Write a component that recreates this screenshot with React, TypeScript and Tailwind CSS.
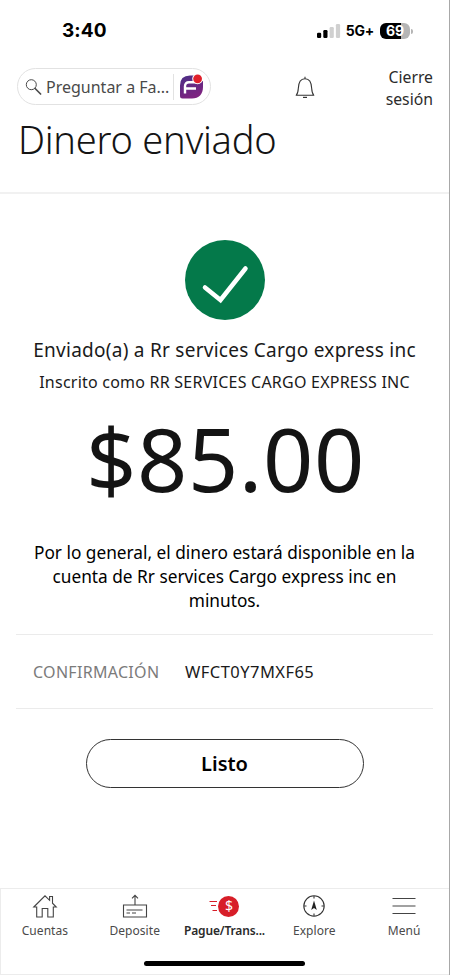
import type { ReactNode } from "react";

function StatusBar() {
  return (
    <div className="flex h-[62px] items-start justify-between pl-[62px] pr-[36px] pt-[20px] font-['Inter',sans-serif] text-black">
      <span className="text-[19px] font-bold leading-[22px] tracking-[0.1px]">3:40</span>
      <div className="flex h-[22px] items-center">
        <svg width="24" height="16" viewBox="0 0 24 16" className="mr-[5px]">
          <rect x="0" y="9.800" width="4.200" height="5.200" rx="1.200" fill="#000" />
          <rect x="6.300" y="7" width="4.200" height="8" rx="1.200" fill="#000" />
          <rect x="12.600" y="4" width="4.200" height="11" rx="1.200" fill="#d0d0d0" />
          <rect x="18.900" y="1" width="4.200" height="14" rx="1.200" fill="#d0d0d0" />
        </svg>
        <span className="mr-[6px] text-[14px] font-bold leading-[22px] tracking-[-0.200px]">5G+</span>
        <div className="flex h-[16px] w-[30px] items-center justify-center rounded-[6px] bg-linear-to-r from-black from-70% to-[#b5b5b5] to-70%">
          <span className="text-[14px] font-bold leading-[16px] text-white">69</span>
        </div>
        <span className="ml-px h-[5px] w-[2px] rounded-r-full bg-[#b5b5b5]" />
      </div>
    </div>
  );
}

function FargoLogo() {
  return (
    <svg width="26" height="26" viewBox="0 0 26 26">
      <defs>
        <linearGradient id="fargo" x1="0" y1="0" x2="0.4" y2="1">
          <stop offset="0" stopColor="#4a2f86" />
          <stop offset="1" stopColor="#7d2380" />
        </linearGradient>
      </defs>
      <path
        d="M11 1.500H16V7H24V13C24 20 20 24.500 13 24.500H3.500Q1 24.500 1 22V11.500Q1 1.500 11 1.500Z"
        fill="url(#fargo)"
      />
      <path
        d="M20 8.300H10Q6 8.300 6 12.300V19.500M6 15.500Q6 14.500 7.500 14.500H17"
        fill="none"
        stroke="#fff"
        strokeWidth="2.400"
      />
      <circle cx="18.600" cy="4.800" r="5.400" fill="#fff" />
      <circle cx="18.600" cy="4.800" r="4.400" fill="#e0202b" />
    </svg>
  );
}

function Header() {
  return (
    <header className="h-[132px] border-b-2 border-[#f1f1f1]">
      <div className="flex h-[55px] items-start pl-[17px] pr-[16px] pt-[6px]">
        <div className="flex h-[37px] w-[194px] items-center rounded-full border border-[#e2e2e2] pl-[7px]">
          <svg width="18" height="18" viewBox="0 0 18 18" fill="none" stroke="#4a4a4a">
            <circle cx="6.300" cy="6.700" r="5" strokeWidth="1" />
            <path d="M10.100 10.500L15.600 16" strokeWidth="1.700" strokeLinecap="round" />
          </svg>
          <span className="ml-[3px] w-[127px] whitespace-nowrap text-[16px] leading-[20px] text-[#4a4a4a]">
            Preguntar a Fa...
          </span>
          <span className="mr-[5px] h-[26px] w-px bg-[#e2e2e2]" />
          <FargoLogo />
        </div>
        <svg width="20" height="24" viewBox="0 0 20 24" fill="none" stroke="#333" className="ml-[84px] mt-[8px]">
          <path
            d="M1.200 19.300H18.800C17.200 17.600 16.900 16 16.700 12.500C16.500 6.500 14.800 2.700 10 2.700C5.200 2.700 3.500 6.500 3.300 12.500C3.100 16 2.800 17.600 1.200 19.300ZM10 2.700V0.800"
            strokeWidth="1.100"
            strokeLinejoin="round"
          />
          <path d="M8 21.400H12" strokeWidth="1.200" />
        </svg>
        <span className="-mt-[2px] ml-auto w-[60px] text-right text-[15.750px] leading-[22px] text-[#2b2b2b]">
          Cierre sesión
        </span>
      </div>
      <h1 className="pl-[18px] text-[38px] font-[260] leading-[44px] tracking-[-0.250px] text-[#141414]">
        Dinero enviado
      </h1>
    </header>
  );
}

function TabItem({ label, active, children }: { label: string; active?: boolean; children: ReactNode }) {
  return (
    <div className="flex w-[90px] flex-col items-center">
      <div className="flex h-[26px] items-center justify-center">{children}</div>
      <span
        className={`mt-[4px] whitespace-nowrap text-[12px] leading-[16px] ${active ? "tracking-[-0.150px] font-semibold text-[#2b2b2b]" : "tracking-[0.050px] text-[#4a4a4a]"}`}
      >
        {label}
      </span>
    </div>
  );
}

function TabBar() {
  return (
    <nav className="mt-auto h-[87px] border-b border-l border-t border-[#ececec]">
      <div className="-ml-px flex pt-[4px]">
        <TabItem label="Cuentas">
          <svg width="26" height="26" viewBox="0 0 26 26" fill="none" stroke="#444" strokeWidth="1.100">
            <path d="M1.800 14L13 2.800L17.600 7.300V3.500H20.500V10.200L24.200 14H21.300V24H15.800V15.500H10.200V24H4.700V14Z" />
          </svg>
        </TabItem>
        <TabItem label="Deposite">
          <svg width="26" height="26" viewBox="0 0 26 26" fill="none" stroke="#444" strokeWidth="1.100">
            <path d="M1.500 12H24.500V24H1.500ZM13 12V2.500M10 5.300L13 2.300L16 5.300M4.500 17H20.500M4.500 20H8M10 20H14" />
          </svg>
        </TabItem>
        <TabItem label="Pague/Trans..." active>
          <div className="flex items-center">
            <svg width="9" height="22" viewBox="0 0 9 22" stroke="#d71e28" strokeWidth="1.100">
              <path d="M0.500 6.500H8M2 10.500H7M3.500 15.500H8" />
            </svg>
            <span className="flex h-[21px] w-[21px] items-center justify-center rounded-full bg-[#d71e28] text-[14px] leading-[20px] text-white">
              $
            </span>
          </div>
        </TabItem>
        <TabItem label="Explore">
          <svg width="26" height="26" viewBox="0 0 26 26" fill="none" stroke="#333" strokeWidth="1.100">
            <circle cx="13" cy="13" r="10.200" />
            <path d="M13 3V5.500M13 20.500V23M3 13H5.500M20.500 13H23" />
            <path d="M13 7.500L15.800 17L13 15L10.200 17Z" fill="#222" stroke="none" />
          </svg>
        </TabItem>
        <TabItem label="Menú">
          <svg width="24" height="18" viewBox="0 0 24 18" stroke="#444" strokeWidth="1.200">
            <path d="M0.500 1.500H23.500M0.500 9H23.500M0.500 16.500H23.500" />
          </svg>
        </TabItem>
      </div>
      <div className="ml-[143px] mt-[22px] h-[5px] w-[161px] rounded-full bg-black" />
    </nav>
  );
}

export default function App() {
  return (
    <div className="flex h-[975px] w-[450px] flex-col overflow-hidden border-r border-[#a8a8a8] bg-white font-['Noto_Sans',sans-serif]">
      <StatusBar />
      <Header />
      <main className="flex flex-col items-center text-[#1a1a1a]">
        <svg width="80" height="80" viewBox="0 0 80 80" className="mt-[46px]">
          <circle cx="40" cy="40" r="40" fill="#04794a" />
          <path
            d="M20 47.500L35.500 60L60.500 28.500"
            fill="none"
            stroke="#fff"
            strokeWidth="4.500"
            strokeLinecap="round"
          />
        </svg>
        <p className="mt-[16px] whitespace-nowrap text-[19px] leading-[28px] tracking-[0.260px]">
          Enviado(a) a Rr services Cargo express inc
        </p>
        <p className="mt-[6px] whitespace-nowrap text-[16px] leading-[24px] tracking-[0.230px]">
          Inscrito como RR SERVICES CARGO EXPRESS INC
        </p>
        <p className="mt-[14px] whitespace-nowrap pl-[2px] text-[88px] leading-[100px] tracking-[0.600px] text-[#141414]">
          $85.00
        </p>
        <p className="mt-[33px] text-center text-[17.250px] leading-[24px] text-black">
          Por lo general, el dinero estará disponible en la
          <br />
          cuenta de Rr services Cargo express inc en
          <br />
          minutos.
        </p>
        <dl className="mt-[21px] flex h-[75px] w-[417px] items-center border-y border-[#ebebeb] pl-[17px] text-[16px]">
          <dt className="w-[152px] tracking-[0.300px] text-[#7b7b7b]">CONFIRMACIÓN</dt>
          <dd className="pt-px text-[16.500px] tracking-[0.450px]">WFCT0Y7MXF65</dd>
        </dl>
        <button className="mt-[30px] h-[49px] w-[278px] rounded-full border border-[#333] pt-px text-[20px] font-semibold text-black">
          Listo
        </button>
      </main>
      <TabBar />
    </div>
  );
}
